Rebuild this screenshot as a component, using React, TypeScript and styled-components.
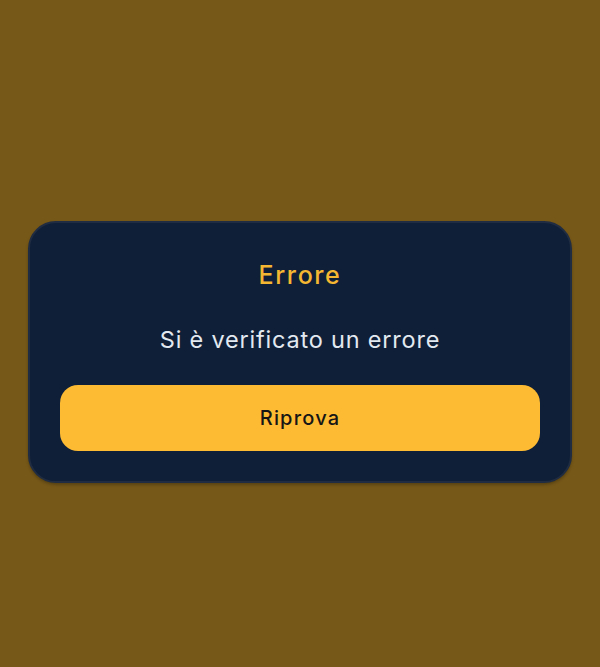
import React from "react";
import styled, { createGlobalStyle } from "styled-components";

const GlobalStyle = createGlobalStyle`
  html, body {
    margin: 0;
    padding: 0;
    background: #765818;
  }
`;

const Screen = styled.div`
  width: 600px;
  height: 667px;
  display: flex;
  align-items: center;
  justify-content: center;
  padding-top: 37px;
  box-sizing: border-box;
  background: #765818;
  font-family: Inter, "Noto Sans", sans-serif;
`;

const Card = styled.div`
  width: 544px;
  box-sizing: border-box;
  background: #0f1f37;
  border: 2px solid #1f2c42;
  border-radius: 28px;
  padding: 34px 30px 30px;
  display: flex;
  flex-direction: column;
  align-items: center;
  box-shadow: 0 2px 3px rgba(0, 0, 0, 0.25);
`;

const Title = styled.h2`
  margin: 0;
  color: #f5b731;
  font-size: 25px;
  font-weight: 500;
  letter-spacing: 1.6px;
  line-height: 36px;
`;

const Message = styled.p`
  margin: 30px 0 0;
  color: #e3e9f0;
  font-size: 23.5px;
  font-weight: 400;
  letter-spacing: 0.8px;
  line-height: 34px;
`;

const RetryButton = styled.button`
  margin-top: 28px;
  width: 100%;
  height: 66px;
  border: none;
  border-radius: 18px;
  background: #fdbb33;
  color: #161616;
  font-family: inherit;
  font-size: 20px;
  font-weight: 500;
  letter-spacing: 1.2px;
  cursor: pointer;
`;

export default function App() {
  return (
    <>
      <GlobalStyle />
      <Screen>
        <Card>
          <Title>Errore</Title>
          <Message>Si è verificato un errore</Message>
          <RetryButton>Riprova</RetryButton>
        </Card>
      </Screen>
    </>
  );
}
